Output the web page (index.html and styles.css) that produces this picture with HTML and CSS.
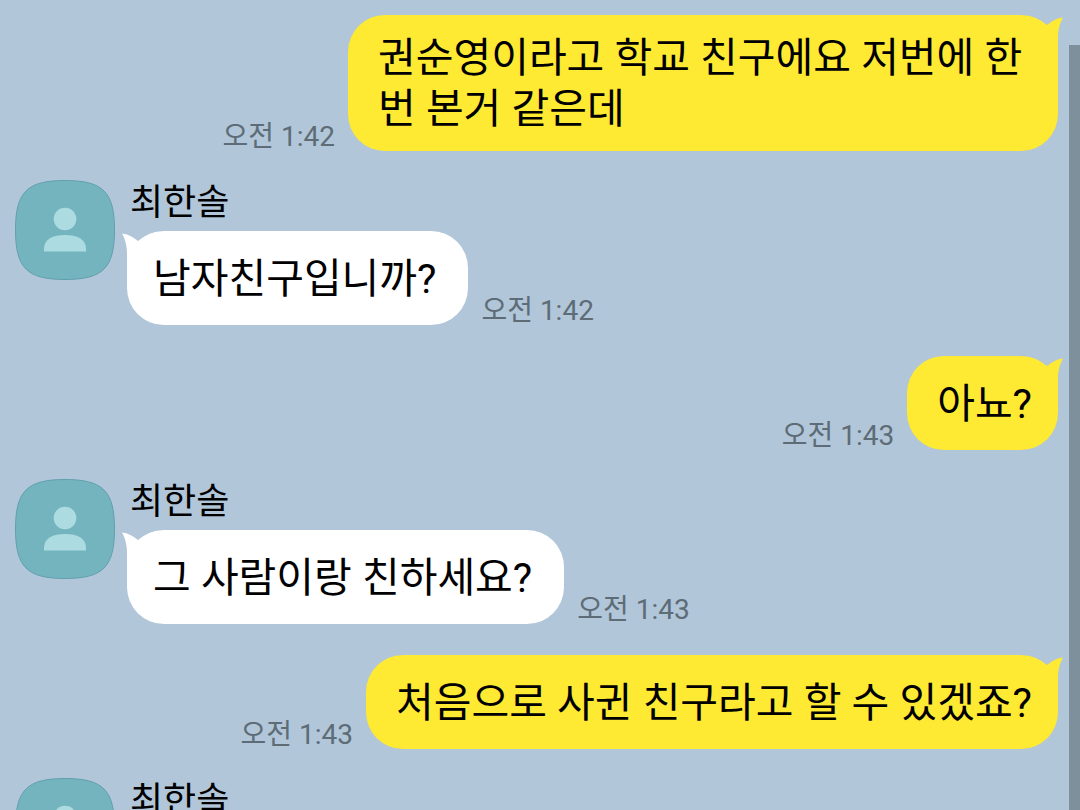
FILE: index.html
```html
<!DOCTYPE html>
<html lang="ko">
<head>
<meta charset="utf-8">
<meta name="viewport" content="width=device-width, initial-scale=1">
<title>최한솔</title>
<link rel="stylesheet" href="styles.css">
</head>
<body>
<svg class="symbols" aria-hidden="true">
  <symbol id="avatar" viewBox="0 0 100 100">
    <path d="M50 .5C88 .5 99.500 12 99.500 50S88 99.500 50 99.500.5 88 .5 50 12 .5 50 .5Z" fill="#74b4bf" stroke="#62a0ad"/>
    <circle cx="50" cy="39" r="11.300" fill="#acdce1"/>
    <path d="M29 71.500V69C29 59 38 55 50 55S71 59 71 69V71.500Z" fill="#acdce1"/>
  </symbol>
  <symbol id="tail" viewBox="0 0 36 36">
    <path d="M0 .7C7 2 14 5 20 10C25 6 30 3 36 2.500C33 8 31 14 31 23V36H0Z" fill="currentColor"/>
  </symbol>
</svg>
<main class="chat">
  <article class="message sent">
    <time class="time">오전 1:42</time>
    <div class="bubble"><svg class="tail" aria-hidden="true"><use href="#tail"/></svg><p class="text">권순영이라고 학교 친구에요 저번에 한번 본거 같은데</p></div>
  </article>
  <article class="message received">
    <svg class="avatar" aria-hidden="true"><use href="#avatar"/></svg>
    <div class="body">
      <h2 class="name">최한솔</h2>
      <div class="line">
        <div class="bubble"><svg class="tail" aria-hidden="true"><use href="#tail"/></svg><p class="text">남자친구입니까?</p></div>
        <time class="time">오전 1:42</time>
      </div>
    </div>
  </article>
  <article class="message sent">
    <time class="time">오전 1:43</time>
    <div class="bubble"><svg class="tail" aria-hidden="true"><use href="#tail"/></svg><p class="text">아뇨?</p></div>
  </article>
  <article class="message received">
    <svg class="avatar" aria-hidden="true"><use href="#avatar"/></svg>
    <div class="body">
      <h2 class="name">최한솔</h2>
      <div class="line">
        <div class="bubble"><svg class="tail" aria-hidden="true"><use href="#tail"/></svg><p class="text">그 사람이랑 친하세요?</p></div>
        <time class="time">오전 1:43</time>
      </div>
    </div>
  </article>
  <article class="message sent">
    <time class="time">오전 1:43</time>
    <div class="bubble"><svg class="tail" aria-hidden="true"><use href="#tail"/></svg><p class="text">처음으로 사귄 친구라고 할 수 있겠죠?</p></div>
  </article>
  <article class="message received">
    <svg class="avatar" aria-hidden="true"><use href="#avatar"/></svg>
    <div class="body">
      <h2 class="name">최한솔</h2>
    </div>
  </article>
</main>
<div class="scrollbar" aria-hidden="true"></div>
</body>
</html>
```
FILE: styles.css
```css
* {
  box-sizing: border-box;
}

body {
  margin: 0;
  height: 100vh;
  overflow: hidden;
  background: #b1c6d9;
  color: #000;
  font-family: Roboto, "Noto Sans CJK KR", sans-serif;
}

.symbols {
  position: absolute;
  width: 0;
  height: 0;
}

.chat {
  display: flex;
  flex-direction: column;
  padding: 15px 22px 0 15px;
}

.message {
  display: flex;
}

.sent {
  justify-content: flex-end;
  align-items: flex-end;
  gap: 13px;
}

.received {
  align-items: flex-start;
  gap: 12px;
  margin: 29px 0 31px;
}

.avatar {
  flex: none;
  width: 100px;
  height: 100px;
}

.name {
  margin: 0 0 5px 3px;
  font-size: 36px;
  font-weight: 400;
  line-height: 46px;
}

.line {
  display: flex;
  align-items: flex-end;
  gap: 13px;
}

.bubble {
  position: relative;
  display: flex;
  align-items: center;
  max-width: 710px;
  min-height: 94px;
  padding: 18px 26px 16px 30px;
  border-radius: 37px;
  background: #fee933;
}

.received .bubble {
  padding-right: 32px;
  padding-left: 26px;
  background: #fff;
}

.text {
  position: relative;
  z-index: 1;
  margin: 0;
  font-size: 41px;
  line-height: 51px;
  word-break: break-all;
}

.tail {
  position: absolute;
  top: 0;
  right: -5px;
  width: 36px;
  height: 36px;
  color: #fee933;
}

.received .tail {
  right: auto;
  left: -5px;
  color: #fff;
  transform: scaleX(-1);
}

.time {
  flex: none;
  color: #5d6c76;
  font-size: 28px;
  line-height: 28px;
}

.scrollbar {
  position: fixed;
  top: 45px;
  right: 0;
  bottom: 0;
  width: 11px;
  background: #7f909d;
}
```
